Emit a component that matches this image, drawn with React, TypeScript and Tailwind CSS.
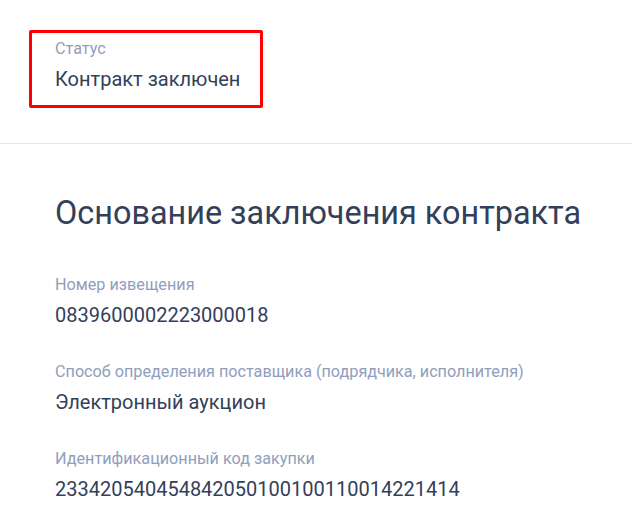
const fields = [
  { label: 'Номер извещения', value: '0839600002223000018' },
  {
    label: 'Способ определения поставщика (подрядчика, исполнителя)',
    value: 'Электронный аукцион',
  },
  { label: 'Идентификационный код закупки', value: '233420540454842050100100110014221414' },
];

export default function App() {
  return (
    <div className="min-h-[513px] bg-white font-['Roboto',sans-serif] text-[#334059]">
      <div className="px-[29px] pt-[30px] pb-[35px]">
        <div className="w-[234px] rounded-[2px] border-[3px] border-[#ff0000] pl-[23px] pt-[4px] pb-[12px]">
          <div className="text-[16.2px] leading-[24px] text-[#909ebb]">Статус</div>
          <div className="mt-[3.5px] text-[20px] leading-[28px]">Контракт заключен</div>
        </div>
      </div>
      <div className="h-px bg-[#e4e7f2]" />
      <div className="px-[55px] pt-[49px]">
        <h2 className="whitespace-nowrap text-[32.4px] leading-[40px]">
          Основание заключения контракта
        </h2>
        <div className="mt-[40.5px] flex flex-col gap-[31px]">
          {fields.map((f) => (
            <div key={f.label}>
              <div className="text-[16.2px] leading-[24px] text-[#909ebb]">{f.label}</div>
              <div className="mt-[4px] text-[20px] leading-[28px]">{f.value}</div>
            </div>
          ))}
        </div>
      </div>
    </div>
  );
}
